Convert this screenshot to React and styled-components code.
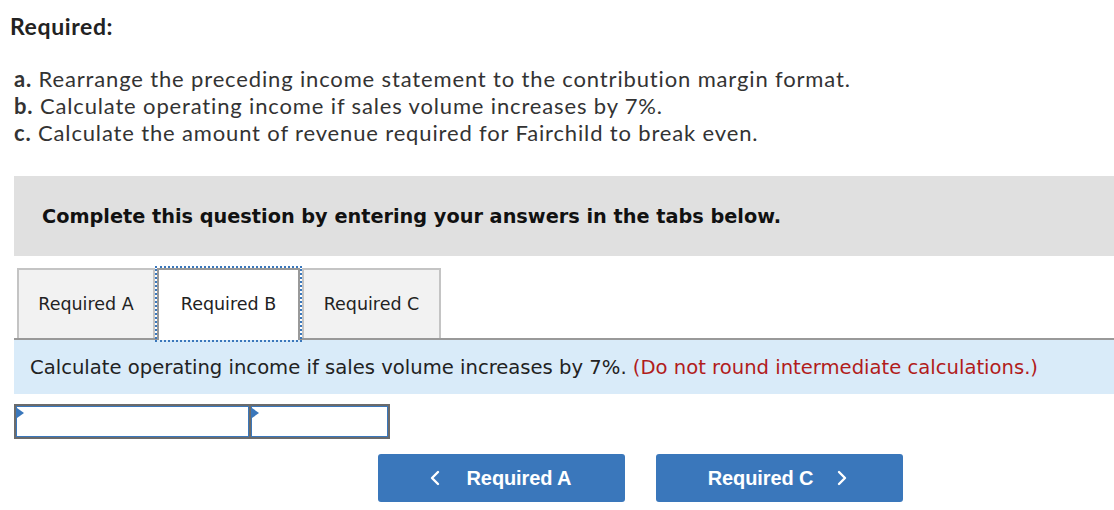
import styled, { createGlobalStyle } from "styled-components";

const Global = createGlobalStyle`
  body {
    margin: 0;
    background: #fff;
    font-family: Lato, "Open Sans", sans-serif;
    color: #333;
  }
`;

const Page = styled.div`
  padding-top: 13px;
  width: 1114px;
  overflow: hidden;
`;

const Title = styled.div`
  font-weight: 700;
  font-size: 23px;
  letter-spacing: 0.6px;
  color: #222;
  padding-left: 10px;
  line-height: 27px;
`;

const List = styled.div`
  margin-top: 25px;
  padding-left: 14px;
  font-size: 22px;
  letter-spacing: 0.85px;
  line-height: 27px;
  color: #333;
`;

const Item = styled.div`
  b {
    font-weight: 700;
  }
`;

const Body = styled.div`
  margin-top: 30px;
  padding-left: 14px;
`;

const Instruction = styled.div`
  background: #e0e0e0;
  height: 80px;
  display: flex;
  align-items: center;
  padding-left: 28px;
  font-family: "DejaVu Sans", sans-serif;
  font-weight: 700;
  font-size: 19.3px;
  color: #111;
`;

const Tabs = styled.div`
  display: flex;
  align-items: flex-end;
  gap: 2px;
  margin-top: 12px;
  padding-left: 3px;
  border-bottom: 2px solid #999;
  height: 70px;
`;

const Tab = styled.div`
  width: ${({ $w }) => $w}px;
  box-sizing: border-box;
  display: flex;
  align-items: center;
  justify-content: center;
  font-family: "DejaVu Sans", sans-serif;
  font-size: 17.5px;
  color: #222;
  background: ${({ $active }) => ($active ? "#fff" : "#f2f2f2")};
  border: 2px solid ${({ $active }) => ($active ? "#999" : "#c4c4c4")};
  border-bottom: none;
  outline: ${({ $active }) => ($active ? "2px dotted #3a77bb" : "none")};
  margin-bottom: ${({ $active }) => ($active ? "-2px" : "0")};
  height: ${({ $active }) => ($active ? "72px" : "70px")};
  padding-bottom: ${({ $active }) => ($active ? "2px" : "0")};
`;

const Prompt = styled.div`
  background: #d9ebf9;
  height: 54px;
  display: flex;
  align-items: center;
  padding-left: 16px;
  font-family: "DejaVu Sans", sans-serif;
  font-size: 19.6px;
  color: #222;
  white-space: nowrap;
`;

const Red = styled.span`
  color: #b11c1c;
`;

const Grid = styled.div`
  margin-top: 10px;
  display: inline-flex;
  background: #6b6b6b;
  padding: 2px;
  gap: 2px;
`;

const Cell = styled.div`
  width: ${({ $w }) => $w}px;
  height: 29px;
  background: #fff;
  border: 1px solid #3a77bb;
  position: relative;
  &::before {
    content: "";
    position: absolute;
    top: 1px;
    left: 0;
    border-top: 5px solid transparent;
    border-bottom: 5px solid transparent;
    border-left: 7px solid #3a77bb;
  }
`;

const Nav = styled.div`
  display: flex;
  gap: 31px;
  margin-top: 14px;
  padding-left: 364px;
`;

const NavButton = styled.button`
  width: 247px;
  height: 48px;
  background: #3a77bb;
  border: none;
  border-radius: 3px;
  color: #fff;
  font-family: "Liberation Sans", Arial, sans-serif;
  font-weight: 700;
  font-size: 20px;
  letter-spacing: -0.1px;
  display: flex;
  align-items: center;
  justify-content: center;
  gap: ${({ $right }) => ($right ? "24px" : "27px")};
  padding: ${({ $right }) => ($right ? "0 4px 0 0" : "0 2px 0 0")};
  svg {
    display: block;
  }
`;

const Chevron = ({ dir }) => (
  <svg width="10" height="16" viewBox="0 0 10 16">
    <polyline
      points={dir === "left" ? "8,2 2,8 8,14" : "2,2 8,8 2,14"}
      fill="none"
      stroke="#fff"
      strokeWidth="2.4"
      strokeLinecap="round"
      strokeLinejoin="round"
    />
  </svg>
);

export default function App() {
  return (
    <Page>
      <Global />
      <Title>Required:</Title>
      <List>
        <Item>
          <b>a.</b> Rearrange the preceding income statement to the contribution margin format.
        </Item>
        <Item>
          <b>b.</b> Calculate operating income if sales volume increases by 7%.
        </Item>
        <Item>
          <b>c.</b> Calculate the amount of revenue required for Fairchild to break even.
        </Item>
      </List>
      <Body>
        <Instruction>Complete this question by entering your answers in the tabs below.</Instruction>
        <Tabs>
          <Tab $w={138}>Required A</Tab>
          <Tab $w={143} $active>
            Required B
          </Tab>
          <Tab $w={139}>Required C</Tab>
        </Tabs>
        <Prompt>
          Calculate operating income if sales volume increases by 7%.&nbsp;
          <Red>(Do not round intermediate calculations.)</Red>
        </Prompt>
        <Grid>
          <Cell $w={231} />
          <Cell $w={135} />
        </Grid>
        <Nav>
          <NavButton>
            <Chevron dir="left" />
            Required A
          </NavButton>
          <NavButton $right>
            Required C
            <Chevron dir="right" />
          </NavButton>
        </Nav>
      </Body>
    </Page>
  );
}
